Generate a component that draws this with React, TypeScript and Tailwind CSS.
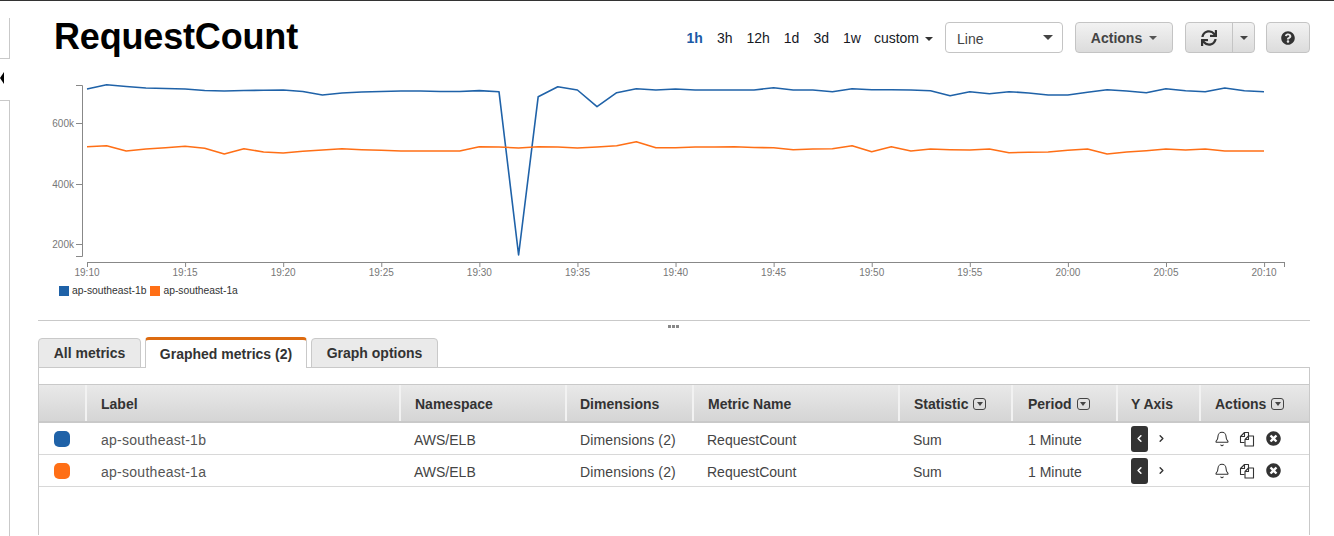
import React from 'react';
import { FaSync, FaQuestionCircle, FaTimesCircle } from 'react-icons/fa';
import { Bell, ChevronLeft, ChevronRight } from 'lucide-react';

const BLUE = '#1f62a8';
const ORANGE = '#ff6f16';

const blueLine = [
  89, 84.7, 86.5, 88, 88.5, 89, 90.5, 91, 90.5, 90.3, 90, 91.5, 95, 93, 92, 91.5, 91, 91, 91.5, 91.5, 90.6, 91.7, 255, 96.7, 86.7, 90,
  106.7, 92.7, 88.7, 90, 89, 90, 90, 90, 90, 87.7, 90, 90, 91.7, 88.7, 89.7, 89.7, 90, 90.7, 95.7, 91.7, 93.7, 91.7, 93, 95, 95, 92.3,
  89.7, 91, 92.7, 88.7, 90.7, 91.7, 88, 90.7, 91.7,
];
const orangeLine = [
  146.7, 145.7, 151, 149, 147.7, 146.3, 148.3, 154, 148.7, 152, 153, 151.3, 150, 148.7, 149.7, 150.3, 151, 151, 151, 151, 146.7, 147,
  148, 146.7, 147, 148, 147, 145.7, 141.7, 147.7, 147.7, 147, 147, 146.7, 147.5, 147.7, 149.7, 149, 148.7, 145.7, 151.7, 146.7, 151,
  149, 149.7, 150, 149, 152.7, 152.3, 152, 150.3, 149, 154, 152, 150.7, 149, 150, 149, 151, 151, 151,
];

const toPoints = (ys: number[]) => ys.map((y, i) => `${(87 + i * 19.617).toFixed(1)},${y - 72}`).join(' ');

const yTicks = [
  { label: '600k', y: 51 },
  { label: '400k', y: 112 },
  { label: '200k', y: 172 },
];
const xTicks = ['19:10', '19:15', '19:20', '19:25', '19:30', '19:35', '19:40', '19:45', '19:50', '19:55', '20:00', '20:05', '20:10'];

const Chart: React.FC = () => (
  <svg width="1334" height="210" className="block" fontFamily="'Liberation Sans', Arial, sans-serif">
    <path d="M76 13.5H82.5V184.5H76M76 51.5H82M76 112.5H82M76 172.5H82" fill="none" stroke="#888" />
    <path d="M87 190.5H1284.5" fill="none" stroke="#888" />
    {yTicks.map(t => (
      <text key={t.label} x="74" y={t.y + 3.5} textAnchor="end" fontSize="10" fill="#777">{t.label}</text>
    ))}
    {xTicks.map((t, i) => (
      <g key={t}>
        <line x1={87.5 + i * 98.09} x2={87.5 + i * 98.09} y1="190" y2="195" stroke="#888" />
        <text x={87 + i * 98.09} y="204" textAnchor="middle" fontSize="10" fill="#777">{t}</text>
      </g>
    ))}
    <line x1="1284.5" x2="1284.5" y1="190" y2="195" stroke="#888" />
    <polyline points={toPoints(blueLine)} fill="none" stroke={BLUE} strokeWidth="1.6" strokeLinejoin="round" />
    <polyline points={toPoints(orangeLine)} fill="none" stroke={ORANGE} strokeWidth="1.6" strokeLinejoin="round" />
  </svg>
);

const Legend: React.FC = () => (
  <div className="flex items-center h-[10px] mt-[4px] ml-[59px] text-[10.3px] text-[#333]">
    <span className="w-[10px] h-[10px] bg-[#1f62a8] mr-[3px]" />
    <span className="mr-[4px]">ap-southeast-1b</span>
    <span className="w-[10px] h-[10px] bg-[#ff6f16] mr-[3px]" />
    <span>ap-southeast-1a</span>
  </div>
);

const Caret: React.FC<{ className?: string }> = ({ className = '' }) => (
  <span className={`inline-block w-0 h-0 border-x-[4px] border-x-transparent border-t-[4px] ${className}`} />
);

const SortBox: React.FC = () => (
  <span className="inline-flex items-center justify-center w-[13px] h-[12px] ml-[5px] border-[1.5px] border-[#444] rounded-[3px]">
    <span className="w-0 h-0 border-x-[3px] border-x-transparent border-t-[4px] border-t-[#444]" />
  </span>
);

// back sheet upper left, front sheet lower right, both with a folded corner
const CopyIcon: React.FC = () => (
  <svg width="16" height="16" viewBox="0 0 16 16" fill="none" stroke="#333" strokeWidth="1.1" strokeLinejoin="round">
    <path d="M5.5 11.5H1.5V5.5L5.5 1.5H9.5V5" />
    <path d="M1.5 5.5H5.5V1.5" />
    <path d="M6 15V8.5L9.5 5H14.5V15Z" />
    <path d="M6 8.5H9.5V5" />
  </svg>
);

const btn = 'h-[31px] flex items-center justify-center border border-[#c4c4c4] rounded-[4px] bg-gradient-to-b from-[#f2f2f2] to-[#dcdcdc] text-[#444]';

const Toolbar: React.FC = () => (
  <div className="flex items-center self-start ml-auto mr-[24px] mt-[5px]">
    <div className="flex items-center gap-[14px] pt-[2px] text-[14px] text-[#16191f] mr-[12px]">
      <span className="font-bold text-[#1b5aa6]">1h</span>
      <span>3h</span>
      <span>12h</span>
      <span>1d</span>
      <span>3d</span>
      <span>1w</span>
      <span className="flex items-center gap-[6px] -ml-[1px]">custom <Caret className="border-t-[#333] border-x-[3px] border-t-[3px]" /></span>
    </div>
    <div className="w-[118px] h-[31px] flex items-center justify-between pl-[11px] pr-[9px] border border-[#c4c4c4] rounded-[4px] bg-white text-[14px] text-[#444]">
      <span className="pt-[3px]">Line</span>
      <Caret className="border-t-[#444] border-x-[5px] border-t-[5px]" />
    </div>
    <div className={`${btn} w-[98px] ml-[12px] gap-[7px] text-[14px] font-bold`}>
      <span className="pt-[1px]">Actions</span>
      <Caret className="border-t-[#555]" />
    </div>
    <div className={`${btn} w-[70px] ml-[12px]`}>
      <span className="flex-1 h-full flex items-center justify-center border-r border-[#c4c4c4]">
        <FaSync className="text-[16px] text-[#333]" />
      </span>
      <span className="w-[21px] flex items-center justify-center"><Caret className="border-t-[#444]" /></span>
    </div>
    <div className={`${btn} w-[44px] ml-[11px]`}>
      <FaQuestionCircle className="text-[14px] text-[#333]" />
    </div>
  </div>
);

const Tabs: React.FC = () => (
  <div className="flex items-end gap-[4px] h-[30px] -mb-px relative text-[14px] font-bold text-[#333]">
    <div className="w-[103px] h-[30px] pt-[1px] flex items-center justify-center bg-[#eaeaea] border border-[#c9c9c9] rounded-t-[4px]">All metrics</div>
    <div className="w-[162px] h-[31px] flex items-center justify-center bg-white border-x border-[#c9c9c9] border-t-[3px] border-t-[#dd6b10] rounded-t-[4px]">Graphed metrics (2)</div>
    <div className="w-[127px] h-[30px] pt-[1px] flex items-center justify-center bg-[#eaeaea] border border-[#c9c9c9] rounded-t-[4px]">Graph options</div>
  </div>
);

const columns = 'grid grid-cols-[46px_314px_166px_127px_206px_113px_105px_83px_110px]';

const headers: { label: string; pad: string; sort?: boolean }[] = [
  { label: 'Label', pad: 'pl-[14px]' },
  { label: 'Namespace', pad: 'pl-[14px]' },
  { label: 'Dimensions', pad: 'pl-[13px]' },
  { label: 'Metric Name', pad: 'pl-[14px]' },
  { label: 'Statistic', pad: 'pl-[14px]', sort: true },
  { label: 'Period', pad: 'pl-[15px]', sort: true },
  { label: 'Y Axis', pad: 'pl-[13px]' },
  { label: 'Actions', pad: 'pl-[14px]', sort: true },
];

const rows = [
  { label: 'ap-southeast-1b', color: 'bg-[#1f62a8]' },
  { label: 'ap-southeast-1a', color: 'bg-[#ff6f16]' },
];

const MetricsTable: React.FC = () => (
  <div className="border border-b-0 border-[#c9c9c9] h-[168px] pt-[16px]">
    <div className={`${columns} h-[39px] border-y border-[#c9c9c9] border-b-2 bg-gradient-to-b from-[#e9e9e9] to-[#d5d5d5] text-[14px] font-bold text-[#333]`}>
      <div />
      {headers.map(h => (
        <div key={h.label} className={`flex items-center pt-[2px] ${h.pad} border-l-2 border-[#f2f2f2]`}>
          {h.label}
          {h.sort && <SortBox />}
        </div>
      ))}
    </div>
    {rows.map(r => (
      <div key={r.label} className={`${columns} h-[32px] border-b border-[#d8d8d8] text-[14px] text-[#444]`}>
        <div className="flex items-center justify-center">
          <span className={`w-4 h-4 rounded-[5px] ${r.color}`} />
        </div>
        <div className="flex items-center pt-[4px] pl-[16px] text-[#555] tracking-[0.27px]">{r.label}</div>
        <div className="flex items-center pt-[4px] pl-[15px]">AWS/ELB</div>
        <div className="flex items-center pt-[4px] pl-[15px] tracking-[0.12px]">Dimensions (2)</div>
        <div className="flex items-center pt-[4px] pl-[15px]">RequestCount</div>
        <div className="flex items-center pt-[4px] pl-[15px]">Sum</div>
        <div className="flex items-center pt-[4px] pl-[17px]">1 Minute</div>
        <div className="flex items-center pl-[15px]">
          <span className="w-[17px] h-[26px] flex items-center justify-center rounded-[3px] bg-[#333]">
            <ChevronLeft size={11} strokeWidth={3.5} className="text-white" />
          </span>
          <ChevronRight size={11} strokeWidth={3} className="ml-[8px] text-[#333]" />
        </div>
        <div className="flex items-center pl-[15px] text-[#333]">
          <Bell size={16} strokeWidth={1.6} className="text-[#333]" />
          <span className="ml-[9px]"><CopyIcon /></span>
          <FaTimesCircle className="ml-[11px] text-[15px]" />
        </div>
      </div>
    ))}
  </div>
);

const Sidebar: React.FC = () => (
  <div className="w-[10px] shrink-0 flex flex-col">
    <div className="h-[41px] mt-[16px] border-r border-b border-[#c9c9c9]" />
    <div className="h-[41px] flex items-center">
      <span className="w-0 h-0 border-y-[6px] border-y-transparent border-r-[4px] border-r-black -mt-[3px]" />
    </div>
    <div className="flex-1 border-r border-t border-[#c9c9c9]" />
  </div>
);

export default function App() {
  return (
    <div className="w-[1334px] h-[536px] overflow-hidden bg-white border-t border-[#333] pt-px flex font-['Liberation_Sans',Arial,sans-serif]">
      <Sidebar />
      <div className="flex-1 min-w-0 flex flex-col">
        <div className="flex h-[70px] pt-[15px]">
          <h1 className="ml-[44px] text-[36px] leading-[40px] font-bold text-black tracking-[-0.17px]">RequestCount</h1>
          <Toolbar />
        </div>
        <div className="-ml-[10px]">
          <Chart />
          <Legend />
        </div>
        <div className="ml-[28px] mr-[24px] mt-[24px] border-t border-[#c9c9c9] relative">
          <span className="absolute left-[630px] top-[4px] flex gap-px">
            <span className="w-[3px] h-[3px] bg-[#888]" />
            <span className="w-[3px] h-[3px] bg-[#888]" />
            <span className="w-[3px] h-[3px] bg-[#888]" />
          </span>
        </div>
        <div className="ml-[28px] mr-[24px] mt-[17px]">
          <Tabs />
          <MetricsTable />
        </div>
      </div>
    </div>
  );
}
